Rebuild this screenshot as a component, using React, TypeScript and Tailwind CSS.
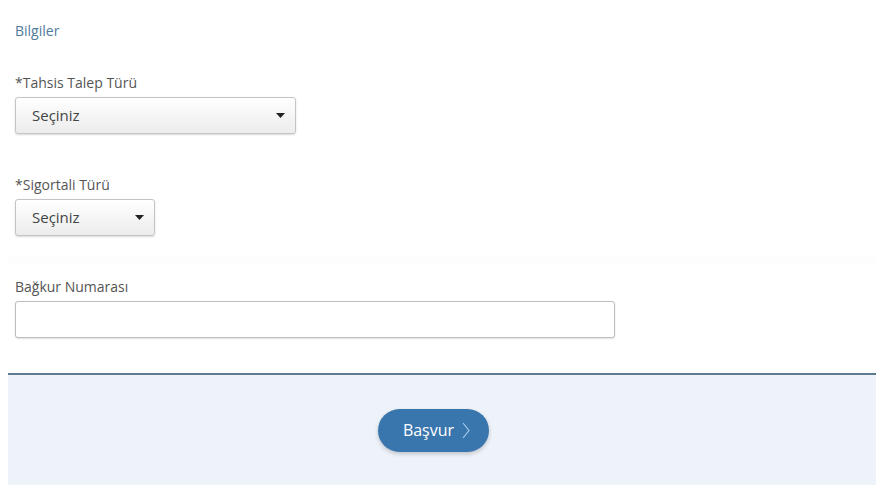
const font = { fontFamily: '"Open Sans", "Noto Sans", sans-serif' };

function SelectBox({ width }: { width: string }) {
    return (
        <div
            className={`${width} h-[37px] flex items-center justify-between pl-[16px] pr-[10px] rounded-[3px] border border-[#c4c4c4] bg-gradient-to-b from-white to-[#ececec] shadow-[0_1px_2px_rgba(0,0,0,0.15)]`}
        >
            <span className="text-[15px] text-[#444]">Seçiniz</span>
            <svg width="9" height="5" viewBox="0 0 9 5">
                <path d="M0 0 L9 0 L4.5 5 Z" fill="#222" />
            </svg>
        </div>
    );
}

export default function App() {
    return (
        <div className="w-[882px] h-[493px] bg-white overflow-hidden" style={font}>
            <div className="px-[15px] pt-[21px]">
                <div className="text-[14px] leading-[20px] text-[#4f7b9a]">Bilgiler</div>

                <div className="mt-[32px] text-[14px] leading-[20px] text-[#555]">*Tahsis Talep Türü</div>
                <div className="mt-[4px]">
                    <SelectBox width="w-[281px]" />
                </div>

                <div className="mt-[41px] text-[14px] leading-[20px] text-[#555]">*Sigortali Türü</div>
                <div className="mt-[4px]">
                    <SelectBox width="w-[140px]" />
                </div>
            </div>

            <div className="mt-[19px] ml-[8px] mr-[6px] h-[8px] bg-[#fdfdfd]" />

            <div className="px-[15px]">
                <div className="mt-[14px] text-[14px] leading-[20px] text-[#555]">Bağkur Numarası</div>
                <div className="mt-[4px] w-[600px] h-[37px] rounded-[3px] border border-[#bdbdbd] bg-white shadow-[0_1px_2px_rgba(0,0,0,0.12)]" />
            </div>

            <div className="mt-[35px] ml-[8px] mr-[6px] h-[112px] border-t-2 border-[#5c7a92] bg-[#eef3fa] flex items-center justify-center pr-[17px]">
                <button className="w-[111px] h-[43px] pl-[6px] rounded-full bg-[#3a76ae] shadow-[0_2px_4px_rgba(0,0,0,0.2)] flex items-center justify-center gap-[8px] text-white text-[16px] font-medium">
                    Başvur
                    <svg width="8" height="17" viewBox="0 0 8 17" fill="none">
                        <path d="M1 1 L7 8.5 L1 16" stroke="#a9c9ea" strokeWidth="1.2" />
                    </svg>
                </button>
            </div>
        </div>
    );
}
